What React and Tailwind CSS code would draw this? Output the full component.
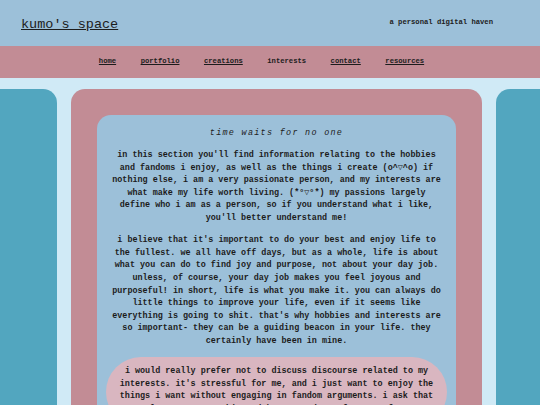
import React from 'react';

const navLinks = [
  { label: 'home', current: false },
  { label: 'portfolio', current: false },
  { label: 'creations', current: false },
  { label: 'interests', current: true },
  { label: 'contact', current: false },
  { label: 'resources', current: false },
];

const App = () => {
  return (
    <div
      className="min-h-screen bg-[#d0eaf6] text-[#1c1c1c] overflow-hidden"
      style={{ fontFamily: '"Liberation Mono", "Courier New", "DejaVu Sans Mono", monospace' }}
    >
      {/* Header */}
      <header className="h-[46px] bg-[#9cc0d9] flex items-center justify-between pl-[21px] pr-[47px]">
        <a href="#" className="text-[13.5px] leading-none underline mt-[4px]">kumo's space</a>
        <span className="text-[7.2px] font-bold leading-none mb-[1px]">a personal digital haven</span>
      </header>

      {/* Nav */}
      <nav className="h-[32px] bg-[#c28c95] flex items-center justify-center gap-[24.5px] pr-[17px]">
        {navLinks.map((link) => (
          <a
            key={link.label}
            href="#"
            className={`text-[7.2px] font-bold leading-none ${link.current ? '' : 'underline'}`}
          >
            {link.label}
          </a>
        ))}
      </nav>

      {/* Body */}
      <div className="flex gap-[14px] pt-[11px] h-[340px]">
        <aside className="w-[57px] shrink-0 bg-[#52a6bf] rounded-tr-[14px]" />

        <main className="flex-1 bg-[#c28c95] rounded-t-[14px] pt-[26px] px-[26px]">
          <div className="bg-[#9cc0d9] rounded-t-[14px] pt-[12px] px-[9px] pb-[20px] text-center text-[8.43px] leading-[12.6px] font-bold">
            <h2 className="italic font-normal tracking-[1.3px]">time waits for no one</h2>

            <p className="mt-[9.5px] px-[5px]">
              in this section you'll find information relating to the hobbies and fandoms i enjoy, as well as the things i create (o^▽^o) if nothing else, i am a very passionate person, and my interests are what make my life worth living. (*°▽°*) my passions largely define who i am as a person, so if you understand what i like, you'll better understand me!
            </p>

            <p className="mt-[9.5px] px-[5px]">
              i believe that it's important to do your best and enjoy life to the fullest. we all have off days, but as a whole, life is about what you can do to find joy and purpose, not about your day job. unless, of course, your day job makes you feel joyous and purposeful! in short, life is what you make it. you can always do little things to improve your life, even if it seems like everything is going to shit. that's why hobbies and interests are so important- they can be a guiding beacon in your life. they certainly have been in mine.
            </p>

            <div className="mt-[9px] bg-[#d9b6c0] rounded-[36px] pt-[8.5px] pb-[12px] px-[12px]">
              <p>
                i would really prefer not to discuss discourse related to my interests. it's stressful for me, and i just want to enjoy the things i want without engaging in fandom arguments. i ask that you please respect this and keep any drama far away from me.
              </p>
            </div>
          </div>
        </main>

        <aside className="w-[44px] shrink-0 bg-[#52a6bf] rounded-tl-[14px]" />
      </div>
    </div>
  );
};

export default App;
